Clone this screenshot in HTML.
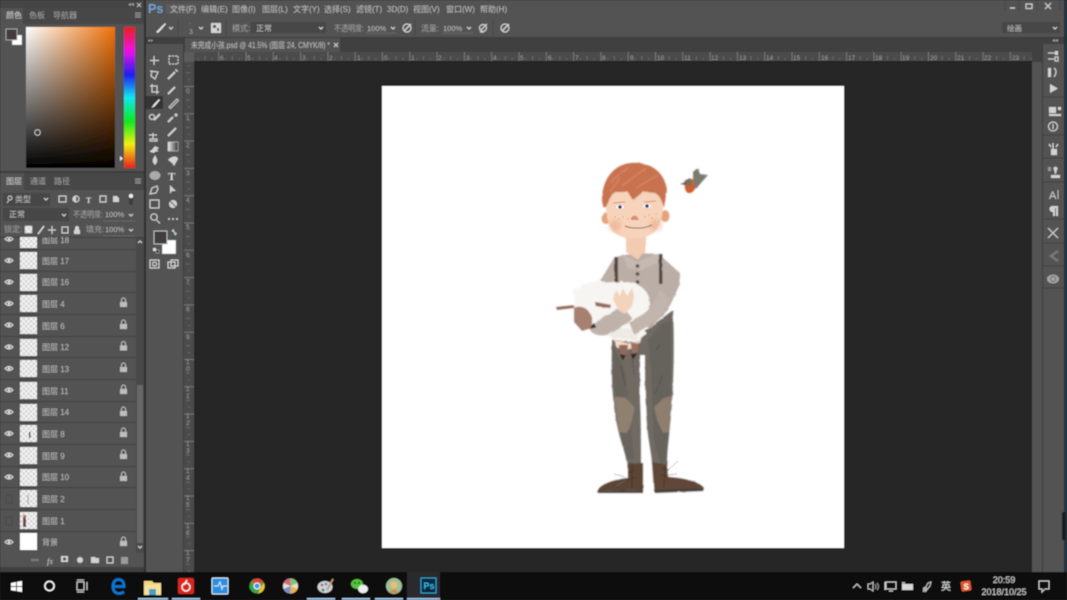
<!DOCTYPE html>
<html lang="zh"><head><meta charset="utf-8"><title>Photoshop</title>
<style>
html,body{margin:0;padding:0;background:#282828;overflow:hidden}
svg{display:block;font-family:"Liberation Sans","Noto Sans CJK SC",sans-serif}
text{fill:#bdbdbd;font-size:8px}
.d{fill:#a0a0a0}.s{font-size:7px;fill:#a0a0a0}.r{font-size:6.5px;fill:#9a9a9a}
.i{fill:none;stroke:#cfcfcf;stroke-width:1.2}.f{fill:#d2d2d2}
</style></head><body>
<svg width="1067" height="600" viewBox="0 0 1067 600" xmlns="http://www.w3.org/2000/svg">
<defs>
<linearGradient id="gh"><stop offset="0" stop-color="#fff"/><stop offset="1" stop-color="#f07208"/></linearGradient>
<linearGradient id="gv" x2="0" y2="1"><stop offset="0" stop-color="#000" stop-opacity="0"/><stop offset="1" stop-color="#000"/></linearGradient>
<linearGradient id="hue" x2="0" y2="1"><stop offset="0" stop-color="#e8201c"/><stop offset=".17" stop-color="#f010e8"/><stop offset=".34" stop-color="#2020f0"/><stop offset=".5" stop-color="#10e8f0"/><stop offset=".67" stop-color="#10e820"/><stop offset=".83" stop-color="#f0f010"/><stop offset="1" stop-color="#e8201c"/></linearGradient>
<linearGradient id="grad"><stop offset="0" stop-color="#eee"/><stop offset="1" stop-color="#333"/></linearGradient>
<pattern id="ck" width="5" height="5" patternUnits="userSpaceOnUse"><rect width="5" height="5" fill="#f4f4f4"/><rect width="2.500" height="2.500" fill="#d6d6d6"/><rect x="2.500" y="2.500" width="2.500" height="2.500" fill="#d6d6d6"/></pattern>
<pattern id="rh" x="382" width="27.3" height="10" patternUnits="userSpaceOnUse"><rect x="0" width="1" height="10" fill="#777"/><rect x="13.6" y="6" width="1" height="4" fill="#6c6c6c"/><rect x="6.8" y="8" width="1" height="2" fill="#666"/><rect x="20.5" y="8" width="1" height="2" fill="#666"/></pattern>
<pattern id="rv" y="86" width="10" height="27.3" patternUnits="userSpaceOnUse"><rect y="0" width="10" height="1" fill="#777"/><rect x="6" y="13.6" width="4" height="1" fill="#6c6c6c"/><rect x="8" y="6.8" width="2" height="1" fill="#666"/><rect x="8" y="20.5" width="2" height="1" fill="#666"/></pattern>
<filter id="soft" x="-5%" y="-5%" width="110%" height="110%"><feGaussianBlur stdDeviation=".42"/></filter>
<filter id="wc" x="-10%" y="-10%" width="120%" height="120%"><feTurbulence type="fractalNoise" baseFrequency=".12" numOctaves="2" seed="4"/><feDisplacementMap in="SourceGraphic" scale="1.600"/><feGaussianBlur stdDeviation=".4"/></filter>
<filter id="wool" x="-10%" y="-10%" width="120%" height="120%"><feTurbulence type="fractalNoise" baseFrequency=".18" numOctaves="2" seed="9"/><feDisplacementMap in="SourceGraphic" scale="5"/><feGaussianBlur stdDeviation=".5"/></filter>
<filter id="bl2"><feGaussianBlur stdDeviation="2.400"/></filter>
<clipPath id="layersClip"><rect x="0" y="237" width="136" height="316"/></clipPath>
</defs>
<g filter="url(#soft)">
<rect width="1067" height="600" fill="#282828"/>
<rect width="144" height="572" fill="#535353"/>
<rect width="144" height="8" fill="#444"/>
<rect x="144" width="2" height="572" fill="#2f2f2f"/>
<rect x="146" width="921" height="38" fill="#535353"/>
<rect x="146" y="37" width="921" height="1" fill="#3b3b3b"/>
<rect x="146" y="38" width="921" height="14" fill="#414141"/>
<rect x="146" y="38" width="38" height="534" fill="#535353"/>
<rect x="146" y="38" width="38" height="6" fill="#414141"/>
<rect x="183" y="38" width="1" height="534" fill="#3b3b3b"/>
<rect x="185" y="38" width="155" height="14" fill="#535353"/>
<rect x="184" y="52" width="848" height="10" fill="#4c4c4c"/>
<rect x="184" y="52" width="848" height="10" fill="url(#rh)"/>
<rect x="184" y="52" width="10" height="520" fill="#4c4c4c"/>
<rect x="184" y="62" width="10" height="510" fill="url(#rv)"/>
<rect x="184" y="52" width="10" height="10" fill="#5c5c5c"/>
<rect x="194" y="62" width="838" height="510" fill="#282828"/>
<rect x="194" y="61" width="838" height="1" fill="#1e1e1e"/>
<g>
<text class="r" x="220" y="60">6</text><text class="r" x="247" y="60">5</text><text class="r" x="274" y="60">4</text><text class="r" x="302" y="60">3</text><text class="r" x="329" y="60">2</text><text class="r" x="357" y="60">1</text><text class="r" x="384" y="60">0</text><text class="r" x="411" y="60">1</text><text class="r" x="438" y="60">2</text><text class="r" x="466" y="60">3</text><text class="r" x="493" y="60">4</text><text class="r" x="520" y="60">5</text><text class="r" x="548" y="60">6</text><text class="r" x="575" y="60">7</text><text class="r" x="602" y="60">8</text><text class="r" x="630" y="60">9</text><text class="r" x="657" y="60">10</text><text class="r" x="684" y="60">11</text><text class="r" x="711" y="60">12</text><text class="r" x="739" y="60">13</text><text class="r" x="766" y="60">14</text><text class="r" x="793" y="60">15</text><text class="r" x="821" y="60">16</text><text class="r" x="848" y="60">17</text><text class="r" x="875" y="60">18</text><text class="r" x="902" y="60">19</text><text class="r" x="930" y="60">20</text><text class="r" x="957" y="60">21</text><text class="r" x="984" y="60">22</text><text class="r" x="1012" y="60">23</text>
<text class="r" x="186" y="93">0</text><text class="r" x="186" y="120">1</text><text class="r" x="186" y="147">2</text><text class="r" x="186" y="175">3</text><text class="r" x="186" y="202">4</text><text class="r" x="186" y="229">5</text><text class="r" x="186" y="257">6</text><text class="r" x="186" y="284">7</text><text class="r" x="186" y="311">8</text><text class="r" x="186" y="339">9</text>
<text class="r" x="186" y="364">1</text><text class="r" x="186" y="371">0</text><text class="r" x="186" y="391">1</text><text class="r" x="186" y="398">1</text><text class="r" x="186" y="418">1</text><text class="r" x="186" y="425">2</text><text class="r" x="186" y="446">1</text><text class="r" x="186" y="453">3</text><text class="r" x="186" y="473">1</text><text class="r" x="186" y="480">4</text><text class="r" x="186" y="500">1</text><text class="r" x="186" y="507">5</text><text class="r" x="186" y="528">1</text><text class="r" x="186" y="535">6</text><text class="r" x="186" y="555">1</text><text class="r" x="186" y="562">7</text>
</g>
<rect x="382" y="86" width="462" height="462" fill="#fff"/>
<!-- Illustration -->
<g filter="url(#wc)">
 <path d="M612 344C611 375 612 400 617 425C620 440 624 450 628 464L641 464C641 440 641 420 640 400L640 355L645 355C645 375 645 400 647 425C648 440 651 450 652 464L667 464C667 450 669 440 670 425C673 400 675 350 673 310L640 335L612 340Z" fill="#6f6b63"/>
 <path d="M612 344C612 370 615 400 620 425L626 460L634 460L630 420L625 370Z" fill="#625f58" opacity=".6"/>
 <path d="M648 340C652 370 652 400 654 440L660 462L667 462L668 430C670 400 672 360 671 320L660 325Z" fill="#5f5c55" opacity=".55"/>
 <path d="M614 397L625 397L635 408L632 420L627 433L619 432Z" fill="#8f806f"/>
 <path d="M672 396L664 398L654 407L657 420L663 433L669 432Z" fill="#8d7e6d"/>
 <path d="M631 345L634 375M621 365L625 385M654 395L659 385M656 350L660 345M659 385L662 375" stroke="#4c4a45" stroke-width=".7" fill="none"/>
 <path d="M628 464L643 463L643 490L598 491C598 486 610 480 628 478Z" fill="#5c4434"/>
 <path d="M652 462L667 464L668 477C685 478 700 482 704 488L654 491Z" fill="#604737"/>
 <path d="M597 491L643 490L643 493L598 493ZM654 490L704 488L703 491L655 493Z" fill="#4a403a"/>
 <!-- shirt body + sleeves -->
 <path d="M600 281L614 258C620 255 630 254 636 254C646 254 656 252 661 256L680 273L680 284L668 310L650 328L620 320L605 300Z" fill="#bbaea6"/>
 <path d="M622 254L637 262L658 253L660 262L642 270L628 268Z" fill="#c5b9b1"/>
 <rect x="614.500" y="257" width="3.400" height="25" fill="#51433d"/>
 <rect x="659" y="254" width="3.400" height="30" fill="#51433d"/>
 <circle cx="637.500" cy="266" r="1.800" fill="#4f4745"/><circle cx="637.500" cy="274" r="1.800" fill="#4f4745"/><circle cx="637.500" cy="282" r="1.800" fill="#4f4745"/>
 <path d="M626 232L646 232L646 252L637 259L626 252Z" fill="#f3cbb0"/>
 <ellipse cx="606" cy="218" rx="4.500" ry="6" fill="#e6a27a"/><ellipse cx="665" cy="216" rx="4.500" ry="6" fill="#e6a27a"/>
 <path d="M607 192L662 190C665 210 662 228 650 235C640 240 625 240 616 234C606 226 605 210 607 192Z" fill="#f6d3ba"/>
 <circle cx="615" cy="226" r="6" fill="#ecaa88" opacity=".6" filter="url(#bl2)"/><circle cx="656" cy="225" r="6" fill="#ecaa88" opacity=".6" filter="url(#bl2)"/>
 <path d="M602 202C601 182 612 165 630 163C650 161 665 172 667 190L664 208C662 200 659 195 655 193L643 192L633 200L628 192L614 192C610 197 608 202 607 207L604 208Z" fill="#c9724f"/>
 <path d="M610 182L628 168M622 186L646 168M636 188L658 175M610 192L620 178" stroke="#d78c69" stroke-width="1.500" opacity=".8"/>
</g>
<g>
 <path d="M613 203L625 202M644 202L656 201" stroke="#c08a68" stroke-width=".8" fill="none"/>
 <ellipse cx="620" cy="207" rx="3.800" ry="2" fill="#fff"/><ellipse cx="647" cy="206" rx="3.800" ry="2" fill="#fff"/>
 <circle cx="620" cy="207" r="1.800" fill="#243a6a"/><circle cx="647" cy="206" r="1.800" fill="#243a6a"/>
 <path d="M631 218C632 215 637 215 638 218L639 220L631 220Z" fill="#d99072"/>
 <path d="M625 226C632 229 644 229 652 225" stroke="#6a4534" stroke-width=".8" fill="none"/>
 <g fill="#b07050"><circle cx="615" cy="217" r=".5"/><circle cx="619" cy="219" r=".5"/><circle cx="623" cy="217" r=".5"/><circle cx="628" cy="219" r=".5"/><circle cx="645" cy="217" r=".5"/><circle cx="649" cy="215" r=".5"/><circle cx="652" cy="218" r=".5"/><circle cx="656" cy="214" r=".5"/></g>
</g>
<g filter="url(#wool)">
 <path d="M574 292C580 282 600 279 615 283C630 279 644 284 648 296C652 310 650 325 642 338C636 344 620 344 612 338C596 332 584 322 575 310Z" fill="#f7f5f2"/>
 <path d="M600 318C615 330 630 332 642 325L636 340L612 338Z" fill="#eeeae4"/>
 <path d="M612 338C620 344 632 345 640 340L634 350L618 349Z" fill="#f8dcc8"/>
</g>
<g filter="url(#wc)">
 <path d="M619 345L628 345L626 358L621 358Z" fill="#92695a"/><path d="M631 343L638 343L637 356L632 357Z" fill="#9a7060"/>
 <path d="M620 355L626 355L623 360ZM631 354L638 353L633 359Z" fill="#2d2220"/>
 <path d="M622 306L590 326C588 332 596 337 606 335C615 332 625 325 632 318Z" fill="#bfb2aa"/>
 <path d="M670 300C664 316 650 326 634 334L629 322L640 316C648 312 654 304 660 290Z" fill="#c2b5ad"/>
 <path d="M613 299L616 290L620 296L623 288L627 296L632 288L634 296L632 306L625 314L618 310Z" fill="#f2d3bc"/>
 <path d="M574 308C582 304 590 310 592 318L592 328L582 331L574 322Z" fill="#a68070"/>
 <path d="M556 307L574 305L574 308L557 310Z" fill="#93695a"/><path d="M595 302L611 305L610 308L596 306Z" fill="#93695a"/>
 <path d="M590 328L594 323L596 327Z" fill="#2b2220"/>
 <!-- bird -->
 <path d="M686 180C690 177 695 179 696 184C696 190 692 194 688 193C684 191 684 185 686 180Z" fill="#cc6030"/>
 <path d="M693 182L693 171L698 168L700 174L708 175L701 183L696 189Z" fill="#7b7a6d"/>
 <path d="M680 184L686 182L686 185Z" fill="#4d3e34"/><path d="M684 181L690 178L692 184L688 186Z" fill="#75705f"/>
</g>
<path d="M625 477L614 474M625 481L616 486M667 471L678 461M667 475L677 474" stroke="#777" stroke-width=".5" fill="none"/>
<path d="M632 466V488M636 470L628 473M636 477L628 480M665 466L664 487M661 468L669 470M661 475L669 477" stroke="#3e3128" stroke-width=".6" fill="none"/>

<!-- Menu bar -->
<text x="148" y="13" style="font:bold 12.500px 'Liberation Sans';fill:#6fa3cf">Ps</text>
<rect x="166" y="4" width="30" height="10" fill="#5b5b5b"/>
<text x="170" y="12">文件(F)</text><text x="201" y="12">编辑(E)</text><text x="232" y="12">图像(I)</text><text x="262" y="12">图层(L)</text><text x="293" y="12">文字(Y)</text><text x="324" y="12">选择(S)</text><text x="356" y="12">滤镜(T)</text><text x="387" y="12">3D(D)</text><text x="413" y="12">视图(V)</text><text x="446" y="12">窗口(W)</text><text x="480" y="12">帮助(H)</text>
<g class="i"><path d="M1010 8H1015" stroke-width="1.500"/><rect x="1026" y="4" width="6" height="4.500"/><path d="M1045 3L1051 9M1051 3L1045 9"/></g>
<path d="M1005 0V10M1019 0V10M1037 0V10M1060 0V10" stroke="#474747"/>
<!-- Options bar -->
<path d="M156 32L160 28L165 23L166 24L161 30L158 33Z" fill="#e2e2e2"/>
<path d="M169 27L171 29L173 27M199 27L201 29L203 27" class="i" stroke-width=".8"/>
<text x="189" y="24" class="s">.</text><text x="189" y="34" class="s">3</text>
<rect x="211" y="23" width="10" height="10" fill="#d4d4d4"/><rect x="213" y="25" width="3" height="3" fill="#555"/><rect x="217" y="28" width="2" height="3" fill="#555"/>
<text x="232" y="31" class="d">模式:</text>
<rect x="251" y="22" width="75" height="11" fill="#474747"/><text x="256" y="31">正常</text>
<path d="M319 27L321 29L323 27M391 27L393 29L395 27M467 27L469 29L471 27" class="i" stroke-width=".8"/>
<text x="334" y="31" class="d" textLength="30" lengthAdjust="spacingAndGlyphs">不透明度:</text><text x="367" y="31" style="font-size:7.500px">100%</text><path d="M366 33H396M443 33H473" stroke="#6f6f6f" stroke-width=".7"/>
<g class="i"><circle cx="407" cy="28" r="4"/><path d="M404 31L411 24" stroke-width="1.500"/></g>
<text x="421" y="31" class="d" textLength="18" lengthAdjust="spacingAndGlyphs">流量:</text><text x="443" y="31" style="font-size:7.500px">100%</text>
<g class="i"><circle cx="483" cy="28" r="3.500"/><path d="M481 30L487 24M480 32L484 32" stroke-width="1.300"/></g>
<g class="i"><circle cx="505" cy="28" r="4"/><path d="M502 31L509 24" stroke-width="1.500"/></g>
<path d="M178 20V36M226 20V36M415 20V36M493 20V36" stroke="#484848"/>
<rect x="1002" y="22" width="58" height="11" fill="#474747"/><text x="1007" y="31" style="font-size:7.500px">绘画</text><path d="M1053 27L1055 29L1057 27" class="i" stroke-width=".8"/>
<!-- Tab -->
<text x="191" y="48" textLength="139" lengthAdjust="spacingAndGlyphs" style="font-size:8px;fill:#c0c0c0">未完成小孩.psd @ 41.5% (图层 24, CMYK/8) *</text>
<path d="M334 43L338 47M338 43L334 47" stroke="#ccc"/>
<text x="148" y="43" class="s">••</text>
<!-- Left: colour panel -->
<text x="128" y="6" class="s" style="font-size:6px">◂◂</text><path d="M137 3L141 7M141 3L137 7" stroke="#bbb"/>
<rect y="8" width="144" height="16" fill="#474747"/><rect x="0" y="8" width="23" height="16" fill="#535353"/>
<text x="6" y="18" style="fill:#cfcfcf">颜色</text><text x="29" y="18" class="d">色板</text><text x="53" y="18" class="d">导航器</text>
<path d="M135 13H141M135 15H141M135 17H141" stroke="#999"/>
<rect x="12" y="35" width="10" height="10" fill="#fff" stroke="#777" stroke-width=".5"/>
<rect x="6" y="29" width="11" height="11" fill="#423e3b" stroke="#bbb" stroke-width=".8"/>
<rect x="26" y="27" width="89" height="141" fill="url(#gh)"/><rect x="26" y="27" width="89" height="141" fill="url(#gv)"/>
<circle cx="37.500" cy="132.500" r="2.800" fill="none" stroke="#ddd" stroke-width=".8"/>
<rect x="124" y="27" width="11" height="141" fill="url(#hue)"/>
<path d="M120 156L123 158.500L120 161Z" fill="#eee"/>
<!-- Layers panel -->
<rect y="171" width="144" height="2" fill="#3c3c3c"/>
<rect y="173" width="144" height="17" fill="#474747"/><rect x="0" y="173" width="24" height="17" fill="#535353"/>
<text x="6" y="184" style="fill:#cfcfcf">图层</text><text x="30" y="184" class="d">通道</text><text x="54" y="184" class="d">路径</text>
<path d="M135 179H141M135 181H141M135 183H141" stroke="#999"/>
<rect x="3" y="193" width="47" height="13" fill="#474747"/><circle cx="10" cy="198" r="2" fill="none" stroke="#ccc"/><path d="M9 200L7 203" stroke="#ccc"/><text x="15" y="202">类型</text><path d="M44 198L46 200L48 198" class="i" stroke-width=".8"/>
<g class="i" stroke-width="1"><rect x="59" y="196" width="7" height="6"/><circle cx="76" cy="199" r="3"/><path d="M100 196H106V202H100Z"/></g><path d="M76 196A3 3 0 0 0 76 202Z" fill="#d2d2d2"/><text x="86" y="203" style="font:bold 8px 'Liberation Serif';fill:#d2d2d2">T</text><path d="M113 202V196H117L119 198V202Z" class="f"/>
<rect x="129" y="196" width="4" height="9" rx="2" fill="#3e3e3e"/><circle cx="131" cy="196" r="2.200" fill="#eee"/>
<rect x="3" y="208" width="66" height="13" fill="#474747"/><text x="9" y="217">正常</text><path d="M62 214L64 216L66 214" class="i" stroke-width=".8"/>
<text x="73" y="217" class="d" textLength="30" lengthAdjust="spacingAndGlyphs">不透明度:</text><text x="105" y="217" style="font-size:7.500px">100%</text><path d="M129 214L131 216L133 214M129 229L131 231L133 229" class="i" stroke-width=".8"/><path d="M103 221H135M103 236H135" stroke="#6f6f6f" stroke-width=".7"/>
<text x="4" y="232" class="d">锁定:</text>
<rect x="25" y="226" width="7" height="7" fill="url(#ck)" stroke="#ccc" stroke-width=".6"/>
<path d="M38 234L44 226" stroke="#d8d8d8" stroke-width="1.500"/><path d="M52 226V234M48 230H56" class="i"/><rect x="62" y="227" width="6" height="6" class="i"/>
<path d="M74 230H80V234H74ZM75 230V228A2 2 0 0 1 79 228V230" class="f"/>
<text x="86" y="232" class="d">填充:</text><text x="105" y="232" style="font-size:7.500px">100%</text>
<rect y="237" width="144" height="1" fill="#3c3c3c"/>
<!-- layer rows -->
<g clip-path="url(#layersClip)">
<g fill="#434343"><rect y="249" width="136" height="1"/><rect y="271" width="136" height="1"/><rect y="292" width="136" height="1"/><rect y="314" width="136" height="1"/><rect y="336" width="136" height="1"/><rect y="357" width="136" height="1"/><rect y="379" width="136" height="1"/><rect y="401" width="136" height="1"/><rect y="422" width="136" height="1"/><rect y="444" width="136" height="1"/><rect y="466" width="136" height="1"/><rect y="487" width="136" height="1"/><rect y="509" width="136" height="1"/><rect y="531" width="136" height="1"/><rect y="553" width="136" height="1"/></g>
<g fill="url(#ck)"><rect x="20" y="231" width="17" height="17"/><rect x="20" y="252" width="17" height="17"/><rect x="20" y="274" width="17" height="17"/><rect x="20" y="295" width="17" height="17"/><rect x="20" y="317" width="17" height="17"/><rect x="20" y="339" width="17" height="17"/><rect x="20" y="360" width="17" height="17"/><rect x="20" y="382" width="17" height="17"/><rect x="20" y="404" width="17" height="17"/><rect x="20" y="425" width="17" height="17"/><rect x="20" y="447" width="17" height="17"/><rect x="20" y="469" width="17" height="17"/><rect x="20" y="490" width="17" height="17"/><rect x="20" y="512" width="17" height="17"/></g>
<rect x="20" y="533" width="17" height="17" fill="#fff"/>
<rect x="29" y="432" width="1.500" height="6" fill="#444"/><rect x="23" y="515" width="3" height="12" fill="#6a4a42"/><rect x="23" y="515" width="3" height="3" fill="#c06a48"/><path d="M28 495V504" stroke="#999"/>
<text x="42" y="243">图层 18</text><text x="42" y="264">图层 17</text><text x="42" y="285">图层 16</text><text x="42" y="307">图层 4</text><text x="42" y="329">图层 6</text><text x="42" y="350">图层 12</text><text x="42" y="372">图层 13</text><text x="42" y="394">图层 11</text><text x="42" y="415">图层 14</text><text x="42" y="437">图层 8</text><text x="42" y="459">图层 9</text><text x="42" y="480">图层 10</text><text x="42" y="502">图层 2</text><text x="42" y="524">图层 1</text><text x="42" y="545">背景</text>
<g fill="none" stroke="#e2e2e2" stroke-width=".9"><path d="M5 239Q9 235 13 239Q9 243 5 239Z"/><path d="M5 260.500Q9 256.500 13 260.500Q9 264.500 5 260.500Z"/><path d="M5 282Q9 278 13 282Q9 286 5 282Z"/><path d="M5 303.500Q9 299.500 13 303.500Q9 307.500 5 303.500Z"/><path d="M5 325Q9 321 13 325Q9 329 5 325Z"/><path d="M5 347Q9 343 13 347Q9 351 5 347Z"/><path d="M5 368.500Q9 364.500 13 368.500Q9 372.500 5 368.500Z"/><path d="M5 390Q9 386 13 390Q9 394 5 390Z"/><path d="M5 412Q9 408 13 412Q9 416 5 412Z"/><path d="M5 433.500Q9 429.500 13 433.500Q9 437.500 5 433.500Z"/><path d="M5 455Q9 451 13 455Q9 459 5 455Z"/><path d="M5 477Q9 473 13 477Q9 481 5 477Z"/><path d="M5 542Q9 538 13 542Q9 546 5 542Z"/></g>
<g fill="#e2e2e2"><circle cx="9" cy="239" r="1.300"/><circle cx="9" cy="260.500" r="1.300"/><circle cx="9" cy="282" r="1.300"/><circle cx="9" cy="303.500" r="1.300"/><circle cx="9" cy="325" r="1.300"/><circle cx="9" cy="347" r="1.300"/><circle cx="9" cy="368.500" r="1.300"/><circle cx="9" cy="390" r="1.300"/><circle cx="9" cy="412" r="1.300"/><circle cx="9" cy="433.500" r="1.300"/><circle cx="9" cy="455" r="1.300"/><circle cx="9" cy="477" r="1.300"/><circle cx="9" cy="542" r="1.300"/></g>
<path d="M6 495H12V503H6ZM6 517H12V525H6Z" fill="none" stroke="#4a4a4a"/>
<g fill="#bdbdbd"><path d="M120 302H127V307H120ZM121 302V300A2.500 2.500 0 0 1 126 300V302H125V300A1.500 1.500 0 0 0 122 300V302Z"/><path d="M120 324H127V329H120ZM121 324V322A2.500 2.500 0 0 1 126 322V324H125V322A1.500 1.500 0 0 0 122 322V324Z"/><path d="M120 345.500H127V350.500H120ZM121 345.500V343.500A2.500 2.500 0 0 1 126 343.500V345.500H125V343.500A1.500 1.500 0 0 0 122 343.500V345.500Z"/><path d="M120 367H127V372H120ZM121 367V365A2.500 2.500 0 0 1 126 365V367H125V365A1.500 1.500 0 0 0 122 365V367Z"/><path d="M120 389H127V394H120ZM121 389V387A2.500 2.500 0 0 1 126 387V389H125V387A1.500 1.500 0 0 0 122 387V389Z"/><path d="M120 411H127V416H120ZM121 411V409A2.500 2.500 0 0 1 126 409V411H125V409A1.500 1.500 0 0 0 122 409V411Z"/><path d="M120 432H127V437H120ZM121 432V430A2.500 2.500 0 0 1 126 430V432H125V430A1.500 1.500 0 0 0 122 430V432Z"/><path d="M120 454H127V459H120ZM121 454V452A2.500 2.500 0 0 1 126 452V454H125V452A1.500 1.500 0 0 0 122 452V454Z"/><path d="M120 476H127V481H120ZM121 476V474A2.500 2.500 0 0 1 126 474V476H125V474A1.500 1.500 0 0 0 122 474V476Z"/><path d="M120 541H127V546H120ZM121 541V539A2.500 2.500 0 0 1 126 539V541H125V539A1.500 1.500 0 0 0 122 539V541Z"/></g>
</g>
<rect x="136" y="238" width="8" height="315" fill="#4a4a4a"/><rect x="137" y="385" width="6" height="158" fill="#686868"/>
<path d="M138 243L140 241L142 243M138 546L140 548L142 546" class="i" stroke-width=".7"/>
<rect y="553" width="144" height="14" fill="#535353"/><rect y="567" width="144" height="5" fill="#3f3f3f"/>
<path d="M31 560H39" stroke="#777" stroke-width="2.500"/><text x="47" y="564" style="font:italic 8.500px 'Liberation Serif';fill:#c8c8c8">fx</text>
<rect x="61" y="556" width="7" height="6" class="f"/><circle cx="64.500" cy="559" r="1.600" fill="#535353"/>
<circle cx="80" cy="560" r="3" class="f"/><path d="M91 557H95L96 558H99V563H91Z" class="f"/><rect x="107" y="557" width="6" height="6" class="i" stroke-width="1"/><path d="M121 557H128V564H121Z" fill="#9a9a9a"/>
<!-- Toolbar icons -->
<g class="i" stroke-width="1.200">
<path d="M154 56V65M150 60.500H159"/><rect x="169" y="56" width="9" height="8" stroke-dasharray="2 1"/>
<path d="M150 71L158 72L155 79L151 76L152 71"/><path d="M168 79L175 72" stroke-width="2"/><path d="M176 69V71M178 71H176"/>
<path d="M152 84V92H159M150 86H157V94"/><path d="M168 94L175 87" stroke-width="2"/>
<path d="M169 107L177 99L178.500 100.500L170.500 108.500Z" stroke-width="1"/>
<circle cx="152" cy="117" r="2.500"/><path d="M154 120L160 114" stroke-width="2"/><path d="M168 122L173 117" stroke-width="2"/><circle cx="176" cy="115" r="1"/>
<path d="M168 136L176 128" stroke-width="2"/>
<rect x="168" y="142" width="10" height="9" fill="url(#grad)" stroke-width=".6"/>
</g>
<rect x="146" y="96" width="17" height="13" fill="#343434"/>
<path d="M151 107C153 107 153 105 154 104L159 99L160 100L155 106C154 107 153 108 151 107Z" fill="#ececec"/>
<path d="M153 139V133M149 135H157M150 139H157V141H150Z" class="i" stroke-width="1.500"/>
<path d="M150 152L155 146L159 148L154 153Z" class="f"/><path d="M150 151H158" stroke="#d8d8d8"/>
<path d="M155 155C157 159 159 161 155 165C151 161 153 159 155 155Z" class="f"/>
<path d="M168 160C172 155 178 156 178 159L174 166L172 163Z" class="f"/>
<ellipse cx="155" cy="175.500" rx="5.500" ry="4.500" fill="#aaa"/>
<text x="168" y="180" style="font:bold 11px 'Liberation Serif';fill:#dcdcdc">T</text>
<path d="M150 194L152 188L157 186L158 189L156 193Z" class="i"/><path d="M170 185L170 194L172 191L176 191Z" class="f"/>
<rect x="150" y="200" width="9" height="8" class="i" fill="#777"/><circle cx="173" cy="204" r="4" class="f"/><path d="M170 201L176 207" stroke="#555"/>
<circle cx="154" cy="217" r="3.200" class="i"/><path d="M156.500 220L160 223.500" class="i" stroke-width="1.600"/>
<circle cx="169" cy="219" r="1" class="f"/><circle cx="173" cy="219" r="1" class="f"/><circle cx="177" cy="219" r="1" class="f"/>
<rect x="162" y="240" width="14" height="14" fill="#fff" stroke="#777" stroke-width=".5"/>
<rect x="154" y="231" width="13" height="13" fill="#423e3b" stroke="#bdbdbd" stroke-width="1"/>
<path d="M172 231Q175 231 175 235M172 231L174 229.500M175 235L176.500 233" class="i" stroke-width=".8"/>
<rect x="156" y="250" width="3" height="3" fill="#111" stroke="#ddd" stroke-width=".5"/><rect x="153" y="248" width="3" height="3" fill="#ddd"/>
<rect x="150" y="260" width="9" height="8" class="i" stroke-width="1"/><circle cx="154.500" cy="264" r="2" class="i" stroke-width=".8"/>
<rect x="168" y="262" width="7" height="6" class="i" stroke-width="1"/><rect x="171" y="260" width="7" height="6" fill="#535353" class="i" stroke-width="1"/>
<!-- right column -->
<rect x="1032" y="62" width="11" height="510" fill="#535353"/><rect x="1032" y="38" width="11" height="24" fill="#414141"/>
<rect x="1043" y="38" width="21" height="534" fill="#535353"/>
<rect x="1043" y="38" width="21" height="6" fill="#414141"/>
<rect x="1042" y="44" width="1" height="528" fill="#3b3b3b"/>
<rect x="1064" y="0" width="3" height="572" fill="#2a2f33"/>
<rect x="1066" y="0" width="1" height="600" fill="#1c3d55"/>
<path d="M1043 97H1064M1043 135H1064M1043 158H1064M1043 182H1064M1043 219H1064M1043 243H1064M1043 266H1064M1043 288H1064" stroke="#3f3f3f"/>
<path d="M1048 53H1058M1048 59H1054M1055 57H1058V61H1055Z" class="i"/><rect x="1055" y="51" width="3" height="4" class="f"/><rect x="1048" y="68" width="3" height="9" class="f"/><path d="M1054 68Q1058 71 1054 77" class="i"/>
<path d="M1050 84V93L1058 88.500Z" class="f"/>
<rect x="1049" y="107" width="7" height="6" class="f"/><rect x="1058" y="107" width="3" height="3" class="f"/><rect x="1049" y="114" width="12" height="2" class="f"/>
<circle cx="1053" cy="126.500" r="4.500" class="i"/><path d="M1053 124V129" stroke="#d8d8d8"/>
<path d="M1051 149H1057V155H1051Z" class="f"/><path d="M1053 149V143M1051 147L1049 144M1056 147L1058 144" stroke="#ddd" stroke-width="1.200"/>
<path d="M1051 175H1060V178H1051ZM1054 170A2 2 0 1 1 1057 170L1056 174H1055Z" class="f"/><rect x="1048" y="167" width="3" height="4" fill="#999"/>
<text x="1049" y="199" style="font:11px 'Liberation Sans';fill:#d0d0d0">A</text><path d="M1058 190V199" stroke="#bbb"/>
<path d="M1052 206H1058V216H1056V208H1055V216H1053V212A3 3 0 0 1 1052 206Z" class="f"/>
<path d="M1048 228L1058 238M1058 228L1048 238" class="i" stroke-width="1.600"/>
<path d="M1058 251L1051 256L1058 261" fill="none" stroke="#777" stroke-width="2.500"/>
<ellipse cx="1053" cy="279" rx="6" ry="4.500" fill="#a6a6a6"/><circle cx="1053" cy="279" r="2.500" fill="none" stroke="#666"/>
<text x="1052" y="42" class="s" style="font-size:6px">◂◂</text>
<rect x="1062" y="512" width="4" height="28" fill="#1a1a1a"/>
<!-- Taskbar -->
<rect y="572" width="1067" height="28" fill="#0c0e11"/>
<rect x="407" y="572" width="33" height="28" fill="#2a2c2e"/>
<g fill="#9cc3e6"><rect x="138" y="598" width="30" height="2"/><rect x="172" y="598" width="28" height="2"/><rect x="307" y="598" width="28" height="2"/><rect x="342" y="598" width="28" height="2"/><rect x="375" y="598" width="28" height="2"/><rect x="407" y="598" width="33" height="2"/></g>
<path d="M11 583L16 582V586H11ZM17 581.800L22 581V586H17ZM11 587H16V591L11 590.300ZM17 587H22V592L17 591.200Z" fill="#fff"/>
<circle cx="49.500" cy="586" r="4.600" fill="none" stroke="#fff" stroke-width="1.500"/>
<path d="M77 582H84V590H77ZM77 580H84M77 592H84M87 582V590" fill="none" stroke="#c6c6c6" stroke-width="1.100"/>
<path d="M113 586.500H124C124 581 121 579.500 118.500 579.500C115 579.500 113 582.500 113 586.500C113 591 115.500 593.500 119 593.500C121 593.500 122.500 592.800 124 592" fill="none" stroke="#0c75d0" stroke-width="2.800"/>
<path d="M144 581H152L154 583H161V595H144Z" fill="#f2d77f"/><path d="M144 585H161V595H144Z" fill="#f6e19c"/><rect x="149" y="589" width="7" height="6" fill="#4a9ec4"/>
<rect x="178" y="578" width="16" height="16" rx="2" fill="#d8281c"/><circle cx="186" cy="587" r="4" fill="none" stroke="#fff" stroke-width="1.300"/><path d="M187 580L184 585" stroke="#fff" stroke-width="1.300"/>
<rect x="212" y="578" width="16" height="16" rx="1" fill="#2b8fe0" stroke="#d6e8f6"/><path d="M214 586H218L220 582L222 589L223 586H227" fill="none" stroke="#d6eaff"/>
<circle cx="257" cy="586" r="7.500" fill="#3ba44c"/><path d="M257 578.500A7.500 7.500 0 0 1 264 583L257 583L251 583A7.500 7.500 0 0 1 257 578.500Z" fill="#dc4436"/><path d="M264 583A7.500 7.500 0 0 1 258 593.500L261 587Z" fill="#f1c232"/><circle cx="257" cy="586" r="3" fill="#4a8df0" stroke="#fff" stroke-width="1"/>
<g transform="translate(3.500 0)"><circle cx="287" cy="586" r="7.500" fill="#e8dfc8"/><path d="M287 586L287 578.500A7.500 7.500 0 0 1 294 583Z" fill="#7fc27a"/><path d="M287 586L280 583A7.500 7.500 0 0 1 287 578.500Z" fill="#d06a80"/><path d="M287 586L294 589A7.500 7.500 0 0 1 287 593.500Z" fill="#e8b24a"/><path d="M287 586L287 593.500A7.500 7.500 0 0 1 280 589Z" fill="#7a8fd0"/></g>
<g transform="translate(4 0)"><ellipse cx="321" cy="587" rx="7.500" ry="6" fill="#c9d2d8"/><circle cx="318" cy="585" r="1.300" fill="#d05050"/><circle cx="322" cy="584" r="1.300" fill="#4f8ac0"/><circle cx="319" cy="590" r="1.300" fill="#4b6a3a"/><path d="M323 590L329 579" stroke="#c99a5a" stroke-width="1.800"/></g>
<g transform="translate(4 0)"><ellipse cx="353" cy="584" rx="6" ry="5" fill="#56c23c"/><ellipse cx="359" cy="589" rx="5" ry="4.200" fill="#eee"/><circle cx="351" cy="583" r=".9" fill="#123"/><circle cx="355" cy="583" r=".9" fill="#123"/></g>
<g transform="translate(4 0)"><circle cx="390" cy="586" r="8" fill="#9fbf9a"/><circle cx="390" cy="585" r="3.500" fill="#e7c070"/><path d="M385 593Q390 586 395 593" fill="#c9913f"/></g>
<rect x="421" y="578" width="15" height="15" fill="#0a2a3c" stroke="#2fa3d8"/><text x="423.500" y="589" style="font:bold 9px 'Liberation Sans';fill:#3ab5ea">Ps</text>
<!-- tray -->
<path d="M853 588L857 584L861 588" fill="none" stroke="#cfcfcf" stroke-width="1.100"/>
<path d="M868 584H870L873 582V591L870 589H868Z" fill="none" stroke="#bbb"/><path d="M875 584Q877 586.500 875 589M877 583Q880 586.500 877 590" fill="none" stroke="#999"/>
<rect x="886" y="582" width="10" height="7" fill="none" stroke="#ccc"/><path d="M889 591H893M885 582V590" stroke="#ccc"/>
<rect x="902" y="584" width="11" height="6" fill="#d8d8d8"/><rect x="902" y="582" width="3" height="2" fill="#aaa"/>
<path d="M923 592L928 583L931 582L930 586L925 592" fill="none" stroke="#c8c8c8"/><circle cx="925" cy="589" r="1.500" fill="none" stroke="#c8c8c8"/>
<text x="941" y="590" style="font-size:10px;fill:#e0e0e0">英</text>
<rect x="961" y="581" width="10" height="10" rx="1.500" fill="#e0592a" transform="rotate(-8 966 586)"/><text x="963.500" y="589.500" style="font:bold 8px 'Liberation Sans';fill:#fff">S</text>
<text x="1004" y="583" text-anchor="middle" style="font-size:9px;fill:#d8d8d8">20:59</text><text x="1004" y="595" text-anchor="middle" style="font-size:9px;fill:#d8d8d8">2018/10/25</text>
<path d="M1039 581H1049V589H1045L1042 592V589H1039Z" fill="none" stroke="#ccc"/>
</g>
</svg>
</body></html>
